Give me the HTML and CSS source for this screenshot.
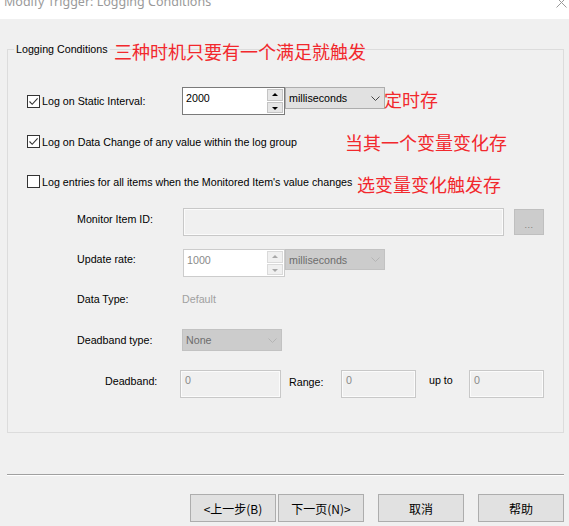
FILE: index.html
```html
<!DOCTYPE html>
<html lang="en">
<head>
<meta charset="utf-8">
<title>Modify Trigger: Logging Conditions</title>
<link rel="stylesheet" href="styles.css">
</head>
<body>
<div class="titlebar">
  <span class="title">Modify Trigger: Logging Conditions</span>
  <svg class="close" width="11" height="11" viewBox="0 0 11 11"><path d="M0.5 0.5L10.5 10.5M10.5 0.5L0.5 10.5" stroke="#9a9a9a" stroke-width="1" fill="none"/></svg>
</div>

<div class="page">
  <fieldset class="group">
    <legend>Logging Conditions</legend>
    <span class="note note-legend">三种时机只要有一个满足就触发</span>

    <div class="row r1">
      <label class="check w1"><span class="box"><svg width="11" height="11" viewBox="0 0 11 11"><path d="M1.5 5.5L4.2 8.3L9.6 2.4" stroke="#333" stroke-width="1.1" fill="none"/></svg></span>Log on Static Interval:</label>
      <div class="spin">
        <span class="spin-text">2000</span>
        <span class="spin-btns"><span class="arr up"></span><span class="arr down"></span></span>
      </div>
      <div class="combo">milliseconds<svg class="chev" width="9" height="5" viewBox="0 0 9 5"><path d="M0.5 0.5L4.5 4.5L8.5 0.5" stroke="#444" fill="none"/></svg></div>
      <span class="note n1">定时存</span>
    </div>

    <div class="row r2">
      <label class="check w2"><span class="box"><svg width="11" height="11" viewBox="0 0 11 11"><path d="M1.5 5.5L4.2 8.3L9.6 2.4" stroke="#333" stroke-width="1.1" fill="none"/></svg></span>Log on Data Change of any value within the log group</label>
      <span class="note">当其一个变量变化存</span>
    </div>

    <div class="row r3">
      <label class="check w3"><span class="box"></span>Log entries for all items when the Monitored Item's value changes</label>
      <span class="note n3">选变量变化触发存</span>
    </div>

    <div class="row r4">
      <span class="lbl up3">Monitor Item ID:</span>
      <div class="field f-id"></div>
      <div class="browse">...</div>
    </div>

    <div class="row r5">
      <span class="lbl up4">Update rate:</span>
      <div class="spin off">
        <span class="spin-text">1000</span>
        <span class="spin-btns"><span class="arr up"></span><span class="arr down"></span></span>
      </div>
      <div class="combo off c-rate">milliseconds<svg class="chev" width="9" height="5" viewBox="0 0 9 5"><path d="M0.5 0.5L4.5 4.5L8.5 0.5" stroke="#b4b4b4" fill="none"/></svg></div>
    </div>

    <div class="row r6">
      <span class="lbl">Data Type:</span>
      <span class="muted">Default</span>
    </div>

    <div class="row r7">
      <span class="lbl">Deadband type:</span>
      <div class="combo off c-type">None<svg class="chev" width="9" height="5" viewBox="0 0 9 5"><path d="M0.5 0.5L4.5 4.5L8.5 0.5" stroke="#b4b4b4" fill="none"/></svg></div>
    </div>

    <div class="row r8">
      <span class="lbl l-db up3">Deadband:</span>
      <div class="field f-db">0</div>
      <span class="lbl l-range up2">Range:</span>
      <div class="field f-small">0</div>
      <span class="lbl l-upto up4">up to</span>
      <div class="field f-small">0</div>
    </div>
  </fieldset>

  <div class="sep"></div>

  <div class="buttons">
    <button class="btn">&lt;上一步(B)</button>
    <button class="btn">下一页(N)&gt;</button>
    <button class="btn gap">取消</button>
    <button class="btn gap">帮助</button>
  </div>
</div>
</body>
</html>
```

FILE: styles.css
```css
* {
  box-sizing: border-box;
}

body {
  margin: 0;
  width: 569px;
  height: 526px;
  overflow: hidden;
  background: #f0f0f0;
  font-family: "Liberation Sans", Arial, sans-serif;
  font-size: 10.7px;
  color: #000;
}

/* window caption, scrolled partly out of view */
.titlebar {
  height: 19px;
  background: #fff;
  display: flex;
  justify-content: space-between;
  overflow: hidden;
}

.title {
  font-family: "Noto Sans", "Open Sans", sans-serif;
  font-size: 12.5px;
  line-height: 16px;
  color: #9a9a9a;
  margin: -6px 0 0 4px;
  white-space: nowrap;
}

.close {
  margin: -3px 2px 0 0;
}

.page {
  padding: 23px 5px 0 7px;
}

/* group box */
.group {
  position: relative;
  margin: 0;
  min-width: 0;
  border: 1px solid #dcdcdc;
  padding: 31px 0 34px 0;
}

.group legend {
  margin-left: 6px;
  padding: 0 2px;
  font-size: 10.7px;
  line-height: 14px;
}

.note {
  font-family: "Noto Sans CJK SC", sans-serif;
  font-size: 18px;
  line-height: 22px;
  color: #f2282d;
  white-space: nowrap;
}

.note-legend {
  position: absolute;
  left: 106px;
  top: -16px;
}

.row {
  display: flex;
  align-items: center;
  white-space: nowrap;
}

.r1 { height: 28px; padding-left: 19px; }
.r2 { height: 13px; padding-left: 19px; margin-top: 20px; }
.r3 { height: 13px; padding-left: 19px; margin-top: 27px; }
.r4 { height: 28px; padding-left: 69px; margin-top: 20px; }
.r5 { height: 28px; padding-left: 69px; margin-top: 13px; }
.r6 { height: 14px; padding-left: 69px; margin-top: 15px; }
.r7 { height: 22px; padding-left: 69px; margin-top: 23px; }
.r8 { height: 28px; padding-left: 97px; margin-top: 19px; }

/* checkboxes */
.check {
  display: flex;
  align-items: center;
  gap: 2px;
  line-height: 14px;
}

.w1 { width: 155px; }
.w2 { width: 318px; }
.w3 { width: 330px; }

.box {
  width: 13px;
  height: 13px;
  flex: none;
  border: 1px solid #333;
  background: #fff;
  display: flex;
}

.n1 { margin: 0 0 4px -1px; }
.n3 { margin-top: 5px; }

/* labels */
.lbl {
  line-height: 14px;
  width: 105px;
  flex: none;
}

.up2 { margin-bottom: 4px; }
.up3 { margin-bottom: 6px; }
.up4 { margin-bottom: 8px; }

.muted {
  color: #a0a0a0;
  line-height: 14px;
}

/* spin boxes */
.spin {
  width: 103px;
  height: 28px;
  border: 1px solid #7a7a7a;
  background: #fff;
  display: flex;
  padding: 1px;
}

.spin-text {
  flex: 1;
  line-height: 14px;
  padding: 2px 0 0 2px;
}

.spin-btns {
  width: 16px;
  display: flex;
  flex-direction: column;
  gap: 1px;
}

.arr {
  flex: 1;
  background: #e6e6e6;
  border: 1px solid #c4c4c4;
  position: relative;
}

.arr::after {
  content: "";
  position: absolute;
  left: 4px;
  border-left: 3px solid transparent;
  border-right: 3px solid transparent;
}

.arr.up::after {
  top: 3px;
  border-bottom: 3px solid #000;
}

.arr.down::after {
  top: 4px;
  border-top: 3px solid #000;
}

.spin.off {
  margin-left: 1px;
  width: 102px;
  border-color: #cccccc;
}

.spin.off .spin-text {
  color: #8a8a8a;
}

.spin.off .arr {
  background: #f0f0f0;
  border-color: #dadada;
}

.spin.off .arr.up::after { border-bottom-color: #a8a8a8; }
.spin.off .arr.down::after { border-top-color: #a8a8a8; }

/* drop-down lists */
.combo {
  width: 100px;
  height: 22px;
  align-self: flex-start;
  background: #e1e1e1;
  border: 1px solid #adadad;
  display: flex;
  align-items: center;
  justify-content: space-between;
  padding: 0 4px 0 3px;
  line-height: 14px;
}

.combo.off {
  background: #cccccc;
  border-color: #c2c2c2;
  color: #6d6d6d;
}

.c-rate {
  height: 21px;
}

.c-type {
  align-self: center;
  padding-left: 3px;
}

/* disabled text fields */
.field {
  height: 28px;
  border: 1px solid #c8c8c8;
  box-shadow: inset 0 0 0 1px #fbfbfb;
  background: #f0f0f0;
  color: #8a8a8a;
  line-height: 14px;
  padding: 2px 0 0 4px;
}

.f-id {
  width: 321px;
  margin-left: 1px;
}

.browse {
  width: 30px;
  height: 26px;
  margin-left: 10px;
  background: #cccccc;
  border: 1px solid #bfbfbf;
  color: #7a7a7a;
  font-size: 9px;
  line-height: 9px;
  display: flex;
  align-items: center;
  justify-content: center;
  padding-top: 6px;
  letter-spacing: 0.5px;
}

.l-db { width: 75px; }
.f-db { width: 101px; }
.l-range { width: 52px; margin-left: 8px; }
.l-upto { width: 40px; margin-left: 13px; }
.f-small { width: 75px; }

/* etched separator */
.sep {
  margin-top: 41px;
  border-top: 1px solid #a0a0a0;
  border-bottom: 1px solid #fff;
}

.buttons {
  margin-top: 18px;
  display: flex;
  justify-content: flex-end;
  gap: 2px;
}

.btn {
  width: 86px;
  height: 28px;
  margin: 0;
  padding: 0;
  background: #e1e1e1;
  border: 1px solid #adadad;
  font-family: "Noto Sans CJK SC", sans-serif;
  font-size: 12px;
  color: #000;
}

.btn.gap {
  margin-left: 12px;
}
```
